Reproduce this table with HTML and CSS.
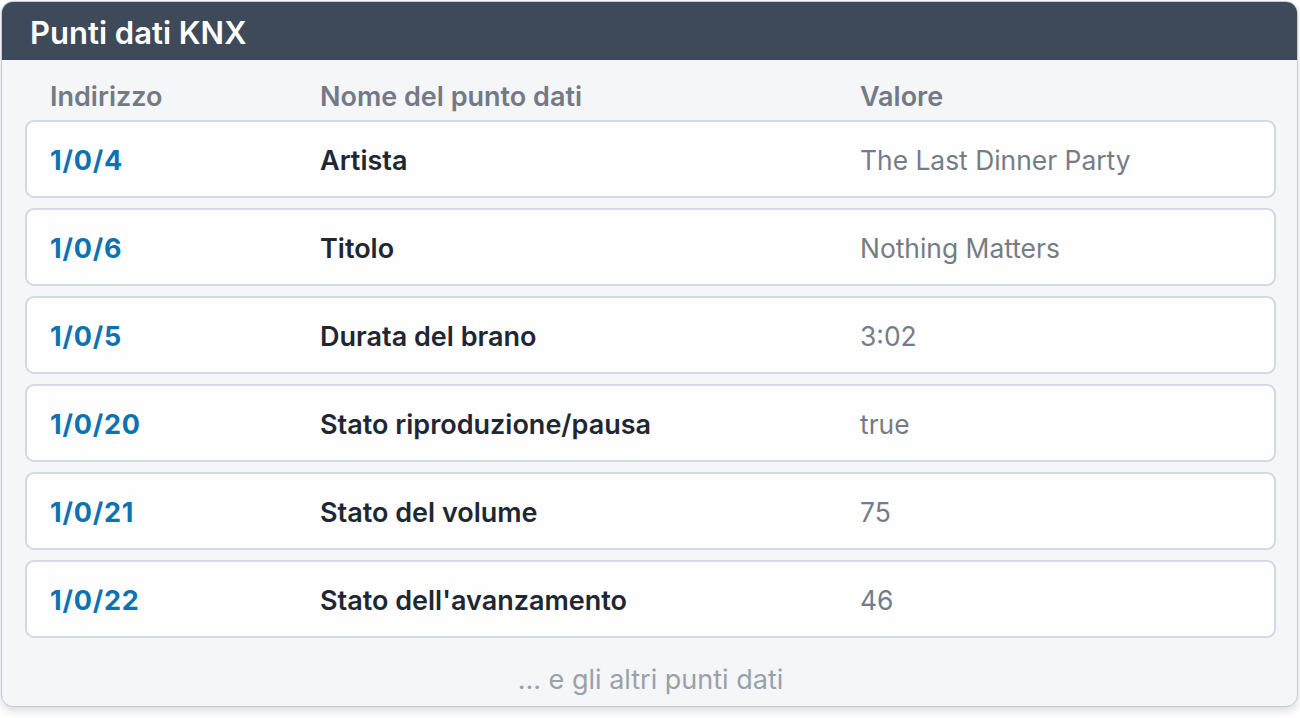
FILE: index.html
```html
<!DOCTYPE html>
<html lang="it">
<head>
<meta charset="utf-8">
<title>Punti dati KNX</title>
<link rel="stylesheet" href="styles.css">
</head>
<body>
<div class="card">
  <div class="card-head">Punti dati KNX</div>
  <div class="card-body">
    <div class="cols">
      <div class="c-addr">Indirizzo</div>
      <div class="c-name">Nome del punto dati</div>
      <div class="c-val">Valore</div>
    </div>
    <div class="rows">
      <div class="row"><div class="addr">1/0/4</div><div class="name">Artista</div><div class="val">The Last Dinner Party</div></div>
      <div class="row"><div class="addr">1/0/6</div><div class="name">Titolo</div><div class="val">Nothing Matters</div></div>
      <div class="row"><div class="addr">1/0/5</div><div class="name">Durata del brano</div><div class="val">3:02</div></div>
      <div class="row"><div class="addr">1/0/20</div><div class="name">Stato riproduzione/pausa</div><div class="val">true</div></div>
      <div class="row"><div class="addr">1/0/21</div><div class="name">Stato del volume</div><div class="val">75</div></div>
      <div class="row"><div class="addr">1/0/22</div><div class="name">Stato dell'avanzamento</div><div class="val">46</div></div>
    </div>
    <div class="more">... e gli altri punti dati</div>
  </div>
</div>
</body>
</html>
```
FILE: styles.css
```css
* { box-sizing: border-box; }
html, body { margin: 0; padding: 0; background: #ffffff; }
body {
  font-family: Inter, "Noto Sans", sans-serif;
  width: 1300px;
  height: 718px;
  overflow: hidden;
}
.card {
  margin: 1px 0 0 1px;
  width: 1297px;
  height: 706px;
  border: 1px solid #c3cad3;
  border-radius: 12px;
  background: #f4f6f8;
  overflow: hidden;
  box-shadow: 0 4px 10px rgba(0,0,0,0.14);
  display: flex;
  flex-direction: column;
}
.card-head {
  height: 58px;
  flex: none;
  background: #3e4a5a;
  color: #ffffff;
  font-size: 31px;
  font-weight: 600;
  padding-left: 28px;
  display: flex;
  align-items: center;
  padding-top: 2px;
}
.card-body {
  padding: 0 21px 0 23px;
  flex: 1;
  display: flex;
  flex-direction: column;
}
.cols {
  display: flex;
  padding: 13px 0 0 25px;
  height: 60px;
  line-height: 48px;
  color: #737a85;
  font-size: 27px;
  font-weight: 600;
}
.c-addr, .addr { width: 270px; flex: none; }
.c-name, .name { width: 540px; flex: none; }
.rows {
  display: flex;
  flex-direction: column;
  gap: 10px;
}
.row {
  height: 78px;
  display: flex;
  align-items: center;
  padding: 2px 0 0 23px;
  background: #fefefe;
  border: 2px solid #d3d9e0;
  border-radius: 9px;
  font-size: 27px;
}
.addr { color: #0b72b3; font-weight: 700; letter-spacing: 0.8px; }
.name { color: #1f2733; font-weight: 600; }
.val { color: #767c86; font-weight: 400; font-size: 26.4px; }
.more {
  text-align: center;
  color: #9aa1ab;
  font-size: 27px;
  padding-top: 26px;
  line-height: 32px;
}
```
